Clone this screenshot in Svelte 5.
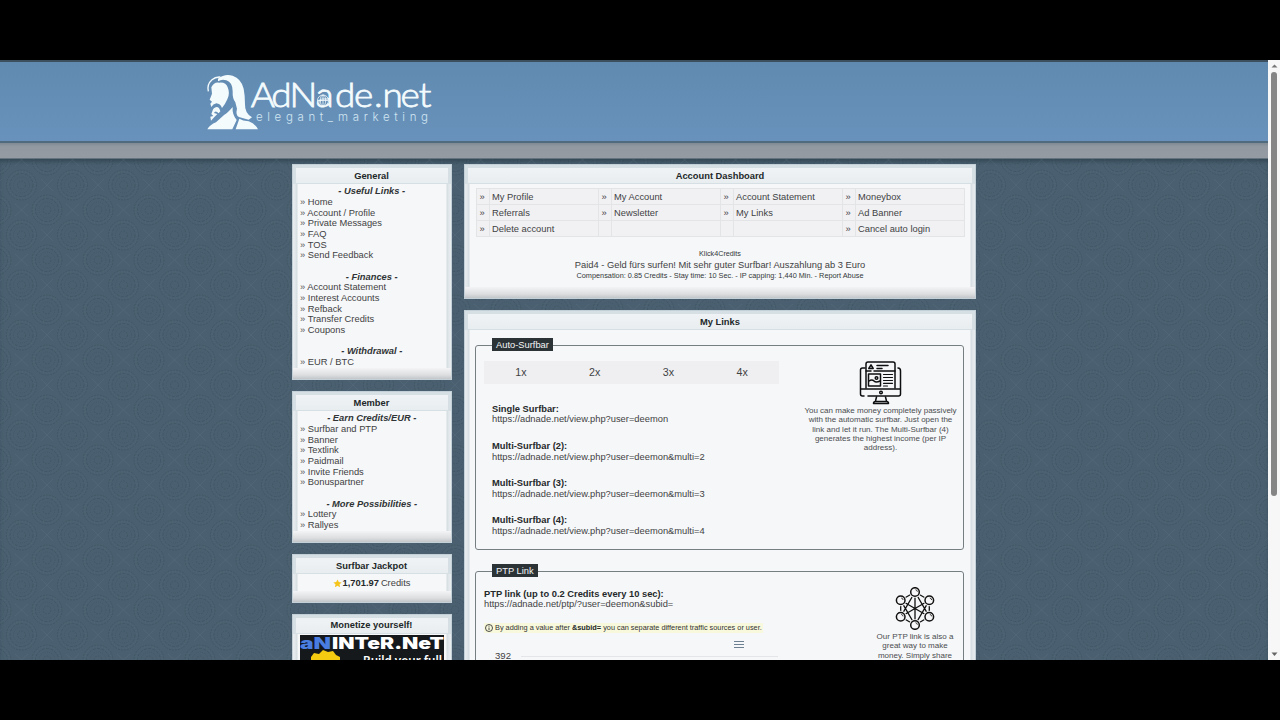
<script>
  const sidebar = [
    {
      title: 'General', height: 216,
      groups: [
        { name: 'Useful Links', links: ['Home', 'Account / Profile', 'Private Messages', 'FAQ', 'TOS', 'Send Feedback'] },
        { name: 'Finances', links: ['Account Statement', 'Interest Accounts', 'Refback', 'Transfer Credits', 'Coupons'] },
        { name: 'Withdrawal', links: ['EUR / BTC'] }
      ]
    },
    {
      title: 'Member', height: 152,
      groups: [
        { name: 'Earn Credits/EUR', links: ['Surfbar and PTP', 'Banner', 'Textlink', 'Paidmail', 'Invite Friends', 'Bonuspartner'] },
        { name: 'More Possibilities', links: ['Lottery', 'Rallyes'] }
      ]
    }
  ];
  const menu = [
    ['My Profile', 'My Account', 'Account Statement', 'Moneybox'],
    ['Referrals', 'Newsletter', 'My Links', 'Ad Banner'],
    ['Delete account', '', '', 'Cancel auto login']
  ];
  const surfbars = [
    ['Single Surfbar:', 'https://adnade.net/view.php?user=deemon'],
    ['Multi-Surfbar (2):', 'https://adnade.net/view.php?user=deemon&multi=2'],
    ['Multi-Surfbar (3):', 'https://adnade.net/view.php?user=deemon&multi=3'],
    ['Multi-Surfbar (4):', 'https://adnade.net/view.php?user=deemon&multi=4']
  ];
  const nodes = [[20, 5], [34.3, 13.3], [34.3, 29.7], [20, 38], [5.7, 29.7], [5.7, 13.3]];
  const rosettes = [[25.5, 25], [0, 0], [51, 0], [0, 50], [51, 50]];
</script>

<div class="screen">
  <div class="viewport">
    <div class="page">
      <header>
        <svg class="logo" width="250" height="75" viewBox="0 0 250 75">
          <g transform="translate(-9 -6) scale(.3333)" fill="#f4fbfd">
            <path d="M84 68Q104 52 128 59Q154 68 161 98Q165 118 165 145Q164 172 186 184L176 191Q158 187 147 183Q136 178 141 158L136 139Q127 128 128 106Q128 79 109 73Q96 68 84 76Z" />
            <path d="M64 94Q72 77 88 80Q108 78 113 94Q121 112 112 130Q105 146 96 156Q91 143 79 142Q69 144 64 153L61 143L66 137L59 131L66 113Z" />
            <path d="M67 166Q70 154 80 153Q88 153 91 166L86 172Q76 161 72 171L82 174Q72 184 63 194L61 182L70 180L64 174Z" />
            <path d="M52 220Q60 206 78 199L103 176Q112 172 128 153Q126 175 140 192L127 220Z" />
            <path d="M137 220L148 188Q158 194 176 196Q195 202 204 220Z" />
            <path d="M55 106Q50 85 66 71Q76 62 91 63" fill="none" stroke="#f4fbfd" stroke-width="4" />
          </g>
          <text class="brand" transform="scale(1.1 1)" x="47 65.700 82.300 106.200 123.600 140.900 159.100 166.800 183.200 199.700" y="45.500">AdNade.net</text>
          <text class="tagline" x="57" y="59" textLength="172" lengthAdjust="spacing">elegant_marketing</text>
          <g fill="#6690b8" fill-opacity=".45" stroke="#f4fbfd" stroke-width=".8">
            <circle cx="124" cy="38.500" r="5.500" />
            <path d="M118.500 38.500h11M124 33v11M121.500 29.500c1-2.500 4-2.500 5 0" fill="none" />
            <ellipse cx="124" cy="38.500" rx="2.700" ry="5.500" fill="none" />
          </g>
        </svg>
      </header>
      <div class="band"></div>
      <main>
        <svg class="pattern" width="100%" height="100%">
          <defs>
            <pattern id="damask" width="51" height="50" patternUnits="userSpaceOnUse" x="-4" y="1">
              <g fill="none" stroke="#2c424e" stroke-width="1" opacity=".34">
                {#each rosettes as [x, y]}
                  <circle cx={x} cy={y} r="15" stroke-dasharray="2 1" />
                  <circle cx={x} cy={y} r="11.5" stroke-dasharray="3 1.4" />
                  <circle cx={x} cy={y} r="8" stroke-dasharray="1 1.2" />
                  <circle cx={x} cy={y} r="4" stroke-dasharray="2 1" />
                {/each}
              </g>
              <g fill="none" stroke="#647b8c" stroke-width="1" opacity=".22">
                {#each rosettes as [x, y]}
                  <circle cx={x} cy={y} r="13.3" stroke-dasharray="1 2" />
                {/each}
                <path d="M19-6L32 6M32-6L19 6M19 44L32 56M32 44L19 56M-6 19L6 31M6 19L-6 31M45 19L57 31M57 19L45 31" />
              </g>
            </pattern>
          </defs>
          <rect width="100%" height="100%" fill="url(#damask)" />
        </svg>
        <div class="columns">
          <aside>
            {#each sidebar as box}
              <section class="panel" style:height="{box.height}px">
                <h2>{box.title}</h2>
                <div class="nav">
                  {#each box.groups as g}
                    <div class="group">
                      <h3>- {g.name} -</h3>
                      {#each g.links as l}<span class="link"><i>»</i> {l}</span>{/each}
                    </div>
                  {/each}
                </div>
              </section>
            {/each}
            <section class="panel jackpot">
              <h2>Surfbar Jackpot</h2>
              <p>
                <svg width="9" height="9" viewBox="0 0 24 24"><path d="M12 1l3.400 7 7.600 1-5.600 5.300L18.800 22 12 18.300 5.200 22l1.400-7.700L1 9l7.600-1z" fill="#f5c51c" /></svg>
                <b>1,701.97</b> Credits
              </p>
            </section>
            <section class="panel monetize">
              <h2>Monetize yourself!</h2>
              <svg class="ad" width="144" height="40" viewBox="0 0 144 40">
                <rect width="144" height="40" fill="#15191c" />
                <path d="M11 22l3-4 5 1 4-4 5 2 5-1 3 4 4 2v18H11z" fill="#f4cb10" />
                <text class="ad-name" x="0" y="13.500" fill="#4a7de0" textLength="31" lengthAdjust="spacingAndGlyphs">aN</text>
                <text class="ad-name" x="32" y="13.500" fill="#fff" textLength="112" lengthAdjust="spacingAndGlyphs">INTeR.NeT</text>
                <text class="ad-line" x="63" y="30" textLength="79" lengthAdjust="spacingAndGlyphs">Build your full</text>
              </svg>
            </section>
          </aside>

          <div class="content">
            <section class="panel dashboard">
              <h2>Account Dashboard</h2>
              <div class="menu">
                {#each menu as row}
                  {#each row as item}
                    <span class="mark">{item ? '»' : ''}</span><span class="item">{item}</span>
                  {/each}
                {/each}
              </div>
              <div class="promo">
                <small>Klick4Credits</small>
                <span>Paid4 - Geld fürs surfen! Mit sehr guter Surfbar! Auszahlung ab 3 Euro</span>
                <small class="terms">Compensation: 0.85 Credits - Stay time: 10 Sec. - IP capping: 1,440 Min. - Report Abuse</small>
              </div>
            </section>

            <section class="panel links">
              <h2>My Links</h2>
              <div class="box surf">
                <div class="legend">Auto-Surfbar</div>
                <div class="surf-main">
                  <div class="tabs"><span>1x</span><span>2x</span><span>3x</span><span>4x</span></div>
                  <div class="urls">
                    {#each surfbars as [name, url]}
                      <p><b>{name}</b><br />{url}</p>
                    {/each}
                  </div>
                </div>
                <div class="note surf-note">
                  <svg width="44" height="45" viewBox="0 0 44 45" fill="none" stroke="#0d0f10" stroke-width="1.500" stroke-linecap="round" stroke-linejoin="round">
                    <path d="M7 27V3q0-2 2-2h25q2 0 2 2v24" />
                    <path d="M7 10h5M15 10h21" />
                    <path d="M6 7H3.500q-2 0-2 2v24q0 2 2 2h1.500M9 35h30.500q2 0 2-2V10q0-3-2.500-3" />
                    <path d="M2 28h39" />
                    <path d="M17.500 36l-1 4M26.500 36l1 4M14.500 42.500q0-2 2-2h11q2 0 2 2z" />
                    <circle cx="22" cy="31.500" r="1.300" />
                    <path d="M12 3.800l-2.200 3.700h4.400zM18 4.500h11M18 7.500h5" />
                    <rect x="9.500" y="13" width="12" height="12" />
                    <path d="M10 20q3-2 5 0t6 0" />
                    <circle cx="17.500" cy="17" r="1.300" />
                    <path d="M24.500 13.500h9M24.500 16.500h9M24.500 19.500h9M24.500 22.300h9M24.500 25h4" stroke-width="1.200" />
                  </svg>
                  <p>You can make money completely passively<br />with the automatic surfbar. Just open the<br />link and let it run. The Multi-Surfbar (4)<br />generates the highest income (per IP<br />address).</p>
                </div>
              </div>

              <div class="box ptp">
                <div class="legend">PTP Link</div>
                <div class="ptp-main">
                  <p><b>PTP link (up to 0.2 Credits every 10 sec):</b><br />https://adnade.net/ptp/?user=deemon&subid=</p>
                  <div class="hint">
                    <svg width="8" height="8" viewBox="0 0 16 16" fill="none" stroke="#222" stroke-width="1.600"><circle cx="8" cy="8" r="7" /><path d="M8 7v5M8 3.500v1.800" /></svg>
                    <span>By adding a value after <b>&subid=</b> you can separate different traffic sources or user.</span>
                  </div>
                  <svg class="burger" width="10" height="8" viewBox="0 0 10 8"><path d="M0 1.500h10M0 4.500h10M0 7.500h10" stroke="#6e8192" /></svg>
                  <div class="axis"><span>392</span><hr /></div>
                </div>
                <div class="note ptp-note">
                  <svg width="40" height="43" viewBox="0 0 40 43" fill="none" stroke="#111" stroke-width="1.300">
                    <path d="M20 5v33M5.700 13.300l28.600 16.400M34.300 13.300L5.700 29.700M20 5l14.300 24.700M20 5L5.700 29.700M20 38L5.700 13.300M20 38l14.300-24.700" />
                    <path d="M20 5l14.300 8.300v16.400L20 38 5.700 29.700V13.300z" />
                    {#each nodes as [x, y]}
                      <circle cx={x} cy={y} r="5.200" fill="#f7f7f9" stroke="#f7f7f9" />
                      <circle cx={x} cy={y} r="4.300" stroke-width="1.500" />
                      <path d="M{x + 0.5} {y - 2.3}q1.800.3 1.900 2" stroke-width=".8" />
                    {/each}
                  </svg>
                  <p>Our PTP link is also a<br />great way to make<br />money. Simply share</p>
                </div>
              </div>
            </section>
          </div>
        </div>
      </main>
    </div>
    <div class="scrollbar">
      <svg width="11" height="12" viewBox="0 0 11 12"><path d="M2.500 7.500L5.500 4.500l3 3z" fill="#777" /></svg>
      <div class="thumb"></div>
      <svg width="11" height="12" viewBox="0 0 11 12"><path d="M2.500 4.500h6l-3 3.500z" fill="#666" /></svg>
    </div>
  </div>
</div>

<style>
  :global(body) { margin: 0; background: #000; }
  .screen { box-sizing: border-box; width: 1280px; height: 720px; padding: 60px 0; background: #000; overflow: hidden; font: 9.33px/10.67px "Liberation Sans", Arial, sans-serif; color: #3f4244; }
  .viewport { display: flex; height: 600px; }
  .page { width: 1268px; height: 600px; overflow: hidden; display: flex; flex-direction: column; background: #4a6070; }
  header { box-sizing: border-box; flex: 0 0 83px; padding-left: 199px; background: linear-gradient(#618ab0, #6892bb); border-top: 2px solid #3b4f5f; border-bottom: 2px solid #506a7e; }
  .logo { display: block; }
  .brand { font: 300 33.5px Lato, sans-serif; fill: #f4fbfd; stroke: #f4fbfd; stroke-width: .8px; }
  .tagline { font: 300 11.5px Inter, sans-serif; fill: #d0e5f2; }
  .band { box-sizing: border-box; flex: 0 0 16px; background: linear-gradient(#7f8a93, #9299a1 25%, #959ba2); border-bottom: 1px solid #64737e; }
  main { flex: 1; min-height: 0; display: grid; box-shadow: inset 0 4px 5px -2px #2f4350; }
  .pattern, .columns { grid-area: 1 / 1; }
  .pattern { display: block; height: 501px; }
  .columns { z-index: 1; display: flex; gap: 12.5px; padding: 5px 0 0 291.5px; height: 496px; }
  aside { width: 160px; display: flex; flex-direction: column; gap: 11px; }
  .content { width: 512px; display: flex; flex-direction: column; gap: 11px; }
  .panel { box-sizing: border-box; flex-shrink: 0; display: flex; flex-direction: column; border: 1px solid #c3d0d8; padding: 0 3px; background: linear-gradient(to top, #c3c6c9, #dcdee0 4px, #f4f4f6 11px, transparent 11px), linear-gradient(90deg, #e9edf0, #dde4e8 3px, #d3dce1 4px, #f6f7f8 5px, #f6f7f8 calc(100% - 5px), #d3dce1 calc(100% - 4px), #dde4e8 calc(100% - 3px), #e9edf0); }
  h2 { box-sizing: border-box; flex: 0 0 19px; margin: 0 -3px 1px; padding-top: 3px; border: solid #d6dfe4; border-width: 3px 3px 1px; text-align: center; font-size: 9.33px; line-height: 11px; color: #222729; background: linear-gradient(#f0f3f5, #e8edef); }
  .nav { display: flex; flex-direction: column; gap: 10.67px; padding: 1.3px 4px 0 4.5px; }
  .group { display: flex; flex-direction: column; }
  h3 { margin: 0; height: 10.67px; text-align: center; font: italic bold 9.33px/10.67px "Liberation Sans", Arial, sans-serif; color: #303436; }
  .link { height: 10.67px; white-space: nowrap; }
  i { font-style: normal; color: #555; }
  p { margin: 0; }
  b { color: #25292b; }
  .jackpot { height: 49px; }
  .jackpot p { display: flex; justify-content: center; align-items: center; gap: 2px; padding-top: 2px; height: 12px; }
  .jackpot svg { margin-right: -1px; }
  .monetize { height: 90px; }
  .monetize h2 { padding-top: 2px; }
  .ad { display: block; margin: 0 4px; }
  .ad-name { font: 900 16px Inter, sans-serif; }
  .ad-line { font: 600 12px "Noto Sans", sans-serif; fill: #fff; }
  .dashboard { height: 135px; }
  .menu { display: grid; grid-template-columns: repeat(4, 13px 109px); grid-template-rows: repeat(3, 16px); margin: 3px 7.5px 0; border: solid #e2e4e6; border-width: 1px 0 0 1px; background: #f1f1f3; width: 488px; font-size: 9.33px; line-height: 16px; }
  .menu span { box-sizing: border-box; border: solid #e2e4e6; border-width: 0 1px 1px 0; }
  .mark { padding-left: 3px; }
  .item { padding-left: 2.5px; }
  .promo { display: flex; flex-direction: column; align-items: center; padding-top: 12px; }
  .promo span { height: 11px; line-height: 12px; }
  .promo small { font-size: 7.2px; line-height: 10px; height: 10px; color: #33373a; }
  .promo .terms { margin-top: 1px; font-size: 7.33px; }
  .links { height: 400px; }
  .box { box-sizing: border-box; position: relative; display: flex; justify-content: space-between; margin-left: 7px; width: 489px; border: 1px solid #777e82; border-radius: 3px; }
  .legend { position: absolute; top: -8px; left: 16px; height: 13px; padding: 0 4px; background: #2b3337; color: #f3f5f6; line-height: 14px; }
  .surf { margin-top: 14px; height: 205px; flex-shrink: 0; }
  .surf-main { padding: 15px 0 0 8px; }
  .tabs { display: flex; width: 295px; height: 23px; background: #efeff1; font-size: 10.67px; line-height: 23px; }
  .tabs span { flex: 1; text-align: center; }
  .urls { display: flex; flex-direction: column; gap: 16px; padding: 19.5px 0 0 8px; line-height: 10.67px; }
  .urls p { height: 21.33px; }
  .note { text-align: center; font-size: 8px; line-height: 9.33px; color: #4a4d50; }
  .note svg { display: block; margin: 0 auto; }
  .surf-note { width: 165px; padding-top: 15px; }
  .ptp { margin-top: 21px; height: 150px; flex-shrink: 0; }
  .ptp-main { width: 294px; padding: 16.5px 0 0 8px; display: flex; flex-direction: column; }
  .hint { display: flex; align-items: center; gap: 2px; align-self: flex-start; height: 10px; margin-top: 13px; padding: 0 1px; font-size: 7.33px; background: #f7f8dc; color: #333; white-space: nowrap; }
  .burger { margin: 7px 0 0 250px; }
  .axis { display: flex; align-items: center; gap: 10px; margin: 3px 0 0 11px; font-size: 9.6px; }
  hr { flex: 1; height: 1px; margin: 0; border: 0; background: #e4e5e8; }
  .ptp-note { width: 96px; padding-top: 15px; }
  .ptp-note p { padding-top: 2px; }
  .scrollbar { width: 12px; background: #f7f7f7; display: flex; flex-direction: column; align-items: center; }
  .thumb { width: 6px; height: 424px; margin-bottom: auto; border-radius: 3px; background: #858585; }
</style>
